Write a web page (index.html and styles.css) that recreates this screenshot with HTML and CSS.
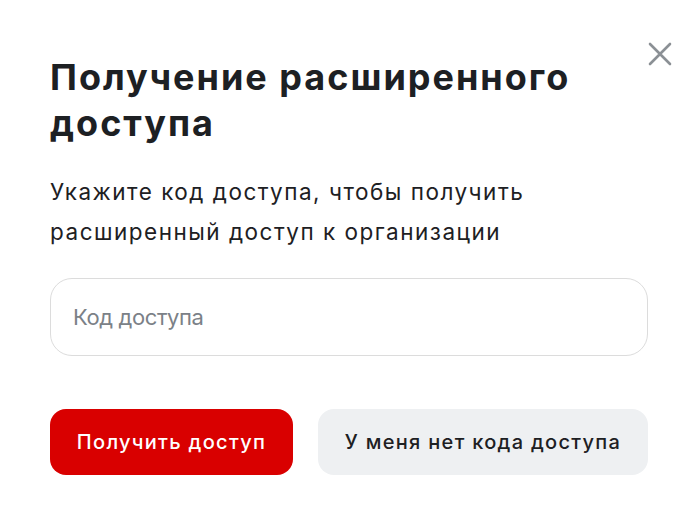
FILE: index.html
```html
<!DOCTYPE html>
<html lang="ru">
<head>
    <meta charset="UTF-8">
    <title>Получение расширенного доступа</title>
    <link rel="stylesheet" href="styles.css">
</head>
<body>

<div class="dialog">
    <button class="close" aria-label="Закрыть">
        <svg width="24" height="24" viewBox="0 0 24 24">
            <path d="M2 2L22 22M22 2L2 22" stroke="#8b9095" stroke-width="2.6" stroke-linecap="round"/>
        </svg>
    </button>

    <h2 class="title">Получение расширенного доступа</h2>
    <p class="text">Укажите код доступа, чтобы получить расширенный доступ к организации</p>

    <input type="text" class="code-input" placeholder="Код доступа">

    <div class="actions">
        <button class="btn btn-primary">Получить доступ</button>
        <button class="btn btn-secondary">У меня нет кода доступа</button>
    </div>
</div>

</body>
</html>
```

FILE: styles.css
```css
body {
    margin: 0;
    background: #fff;
    font-family: Inter, "Noto Sans", sans-serif;
    color: #1d2023;
}
.dialog {
    position: relative;
    padding: 54px 40px 0 50px;
}
.close {
    position: absolute;
    top: 42px;
    right: 28px;
    border: 0;
    padding: 0;
    background: none;
    cursor: pointer;
}
.title {
    margin: 0;
    width: 580px;
    font-size: 36px;
    line-height: 46px;
    font-weight: 700;
    letter-spacing: 2px;
}
.text {
    margin: 26px 0 0;
    width: 560px;
    font-size: 22.5px;
    line-height: 40px;
    font-weight: 400;
    letter-spacing: 1.5px;
}
.code-input {
    display: block;
    box-sizing: border-box;
    width: 598px;
    height: 78px;
    margin-top: 26px;
    padding: 0 22px;
    border: 1.5px solid #dcdcdc;
    border-radius: 22px;
    font-family: inherit;
    font-size: 22px;
    letter-spacing: -0.4px;
    color: #1d2023;
    outline: none;
}
.code-input::placeholder {
    color: #7b8187;
}
.actions {
    display: flex;
    gap: 25px;
    margin-top: 53px;
}
.btn {
    height: 66px;
    border: 0;
    border-radius: 16px;
    padding: 0;
    font-family: inherit;
    font-size: 20px;
    font-weight: 500;
    letter-spacing: 1.3px;
    cursor: pointer;
}
.btn-primary {
    width: 243px;
    background: #d90000;
    color: #fff;
}
.btn-secondary {
    width: 330px;
    background: #eef0f2;
    color: #1d2023;
}
```
